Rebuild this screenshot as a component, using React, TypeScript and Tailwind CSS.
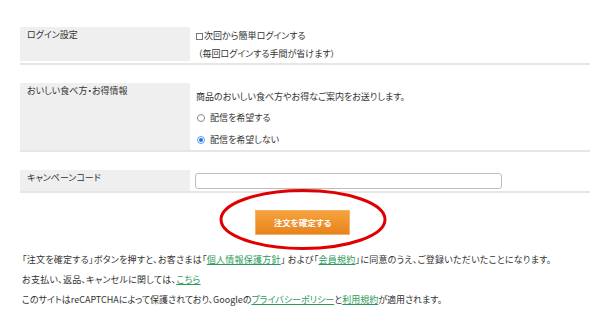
import React from "react";

const font = "[font-family:'Noto_Sans_CJK_JP','Noto_Sans',sans-serif] [font-feature-settings:'palt']";

function Radio({ checked }: { checked?: boolean }) {
  return checked ? (
    <span className="inline-block w-[8px] h-[8px] rounded-full border border-[#5b9cf0] bg-white relative shrink-0">
      <span className="absolute left-[1px] top-[1px] w-[4px] h-[4px] rounded-full bg-[#1a73e8]" />
    </span>
  ) : (
    <span className="inline-block w-[8px] h-[8px] rounded-full border border-[#8a8a8a] bg-white shrink-0" />
  );
}

export default function App() {
  return (
    <div className={`relative w-[611px] h-[321px] bg-white text-[#333] text-[9px] overflow-hidden ${font}`}>
      <div className="pl-[20px] w-[590px] pt-[27px]">
        {/* Row 1 */}
        <div className="flex border-b-2 border-[#e6e6e6]">
          <div className="w-[170px] h-[34px] bg-[#efefef] pl-[7px] pt-[1px] leading-[14px]">ログイン設定</div>
          <div className="pl-[6px] leading-[18px]">
            <div className="flex items-center">
              <span className="inline-block w-[7px] h-[7px] border border-[#777] mr-[1px]" />
              <span>次回から簡単ログインする</span>
            </div>
            <div className="pl-[2px]">（毎回ログインする手間が省けます）</div>
          </div>
        </div>
        {/* Row 2 */}
        <div className="flex border-b-2 border-[#e6e6e6] mt-[18px]">
          <div className="w-[170px] h-[67px] bg-[#efefef] pl-[7px] pt-[1px] leading-[14px]">おいしい食べ方・お得情報</div>
          <div className="pl-[6px] pt-[5px] leading-[18px]">
            <div>商品のおいしい食べ方やお得なご案内をお送りします。</div>
            <div className="flex items-center gap-[5px] mt-[3px] pl-[1px]">
              <Radio />
              <span>配信を希望する</span>
            </div>
            <div className="flex items-center gap-[5px] mt-[4px] pl-[1px]">
              <Radio checked />
              <span>配信を希望しない</span>
            </div>
          </div>
        </div>
        {/* Row 3 */}
        <div className="flex border-b-2 border-[#e6e6e6] mt-[18px]">
          <div className="w-[170px] h-[21px] bg-[#efefef] pl-[7px] pt-[1px] leading-[14px]">キャンペーンコード</div>
          <div className="pl-[5px] pt-[3px]">
            <div className="w-[307px] h-[16px] border border-[#bdbdbd] rounded-[3px] bg-white" />
          </div>
        </div>
        {/* Button */}
        <div className="mt-[17px] pl-[235px]">
          <div className="w-[95px] h-[25px] flex items-center justify-center bg-gradient-to-b from-[#f6a33c] to-[#e8831b] border border-[#f3b36a] text-white font-bold text-[8.5px] leading-none">
            注文を確定する
          </div>
        </div>
        {/* Notes */}
        <div className="pl-[2px] mt-[15px] leading-[20px] whitespace-nowrap">
          <p className="tracking-[0.25px]">
            「注文を確定する」ボタンを押すと、お客さまは「
            <a className="text-[#2f9a5e] underline">個人情報保護方針</a>」 および「
            <a className="text-[#2f9a5e] underline">会員規約</a>」に同意のうえ、ご登録いただいたことになります。
          </p>
          <p className="tracking-[0.25px]">
            お支払い、返品、キャンセルに関しては、<a className="text-[#2f9a5e] underline">こちら</a>
          </p>
          <p>
            このサイトはreCAPTCHAによって保護されており、Googleの
            <a className="text-[#2f9a5e] underline">プライバシーポリシー</a>と
            <a className="text-[#2f9a5e] underline">利用規約</a>が適用されます。
          </p>
        </div>
      </div>
      {/* Red ellipse annotation */}
      <svg className="absolute left-0 top-0 pointer-events-none" width="611" height="321">
        <ellipse cx="303" cy="219.5" rx="82" ry="29" fill="none" stroke="#e00000" strokeWidth="3" />
      </svg>
    </div>
  );
}
